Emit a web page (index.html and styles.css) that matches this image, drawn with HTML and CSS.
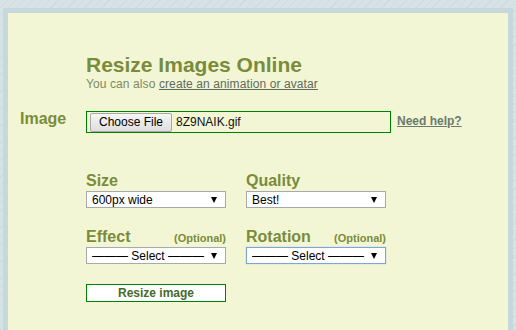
FILE: index.html
```html
<!DOCTYPE html>
<html lang="en">
<head>
    <meta charset="UTF-8">
    <title>Resize Images Online</title>
    <link rel="stylesheet" href="styles.css">
</head>
<body>
    <div class="frame">
        <div class="head">
            <h1>Resize Images Online</h1>
            <p class="sub">You can also <a href="#">create an animation or avatar</a></p>
        </div>
        <div class="row">
            <label class="lbl">Image</label>
            <div class="filebox"><button class="choose">Choose File</button><span class="fname">8Z9NAIK.gif</span></div>
            <a href="#" class="help">Need help?</a>
        </div>
        <div class="opts">
            <div class="opt">
                <div class="optHead"><span>Size</span></div>
                <div class="sel"><select><option>600px wide</option></select></div>
            </div>
            <div class="opt">
                <div class="optHead"><span>Quality</span></div>
                <div class="sel"><select><option>Best!</option></select></div>
            </div>
            <div class="opt">
                <div class="optHead"><span>Effect</span><small>(Optional)</small></div>
                <div class="sel"><select><option>&mdash;&mdash;&mdash; Select &mdash;&mdash;&mdash;</option></select></div>
            </div>
            <div class="opt">
                <div class="optHead"><span>Rotation</span><small>(Optional)</small></div>
                <div class="sel focus"><select><option>&mdash;&mdash;&mdash; Select &mdash;&mdash;&mdash;</option></select></div>
            </div>
        </div>
        <button class="go">Resize image</button>
    </div>
</body>
</html>
```

FILE: styles.css
```css
*, *:before, *:after {box-sizing: border-box;}
* {margin: 0;padding: 0;}
html, body {height: 100%;overflow: hidden;}
body {font-family: 'Liberation Sans', Arial, sans-serif;background: repeating-linear-gradient(135deg, #d6e2e6 0, #d6e2e6 5px, #cedbdf 5px, #cedbdf 6px);}
.frame {margin: 8px 3px 0;border: 5px solid #c7d8dc;border-bottom: 0;background: #f3f6d5;height: calc(100% - 8px);padding: 40px 0 0 12px;}
.head {padding-left: 66px;}
h1 {font-size: 21px;line-height: 24px;color: #7a8c3b;font-weight: bold;}
.sub {font-size: 12px;line-height: 14px;color: #7d8a5e;letter-spacing: .1px;}
.sub a {color: #5f6b5c;text-decoration: underline;}
.row {display: flex;align-items: flex-start;margin-top: 20px;}
.lbl {width: 66px;font-size: 16px;line-height: 16px;font-weight: bold;color: #7a8c3b;}
.filebox {display: flex;align-items: center;gap: 4px;width: 305px;height: 22px;border: 1px solid #008000;padding: 0 3px;background: #f3f6d5;}
.choose {height: 19px;width: 82px;font: 12px 'Liberation Sans', Arial, sans-serif;color: #000;border: 1px solid #a8a8a8;border-radius: 2px;background: linear-gradient(#f6f6f6, #dedede);}
.fname {font-size: 12px;color: #111;}
.help {margin: 3px 0 0 6px;font-size: 12px;line-height: 14px;font-weight: bold;color: #6a7a6c;text-decoration: underline;}
.opts {display: grid;grid-template-columns: 140px 140px;column-gap: 20px;row-gap: 20px;margin: 39px 0 0 66px;}
.optHead {display: flex;justify-content: space-between;align-items: baseline;height: 18px;line-height: 18px;}
.optHead span {font-size: 16px;font-weight: bold;color: #7a8c3b;}
.optHead small {font-size: 11px;font-weight: bold;color: #7a8c3b;}
.sel {position: relative;margin-top: 1px;}
.sel:after {content: '';position: absolute;right: 9px;top: 6px;border-top: 6px solid #000;border-inline: 3.5px solid transparent;pointer-events: none;}
.sel select {appearance: none;-webkit-appearance: none;display: block;width: 140px;height: 17px;padding: 0 0 0 5px;border: 1px solid #a9a9a9;border-radius: 0;background: #fff;font: 12px 'Liberation Sans', Arial, sans-serif;color: #000;outline: none;}
.sel.focus select {border-color: #7ea4d8;box-shadow: 0 0 1px #9cbbe6;}
.go {display: block;margin: 20px 0 0 66px;width: 140px;height: 18px;border: 1px solid #008000;background: #fff;font: bold 12px 'Liberation Sans', Arial, sans-serif;color: #476a2c;}
```
